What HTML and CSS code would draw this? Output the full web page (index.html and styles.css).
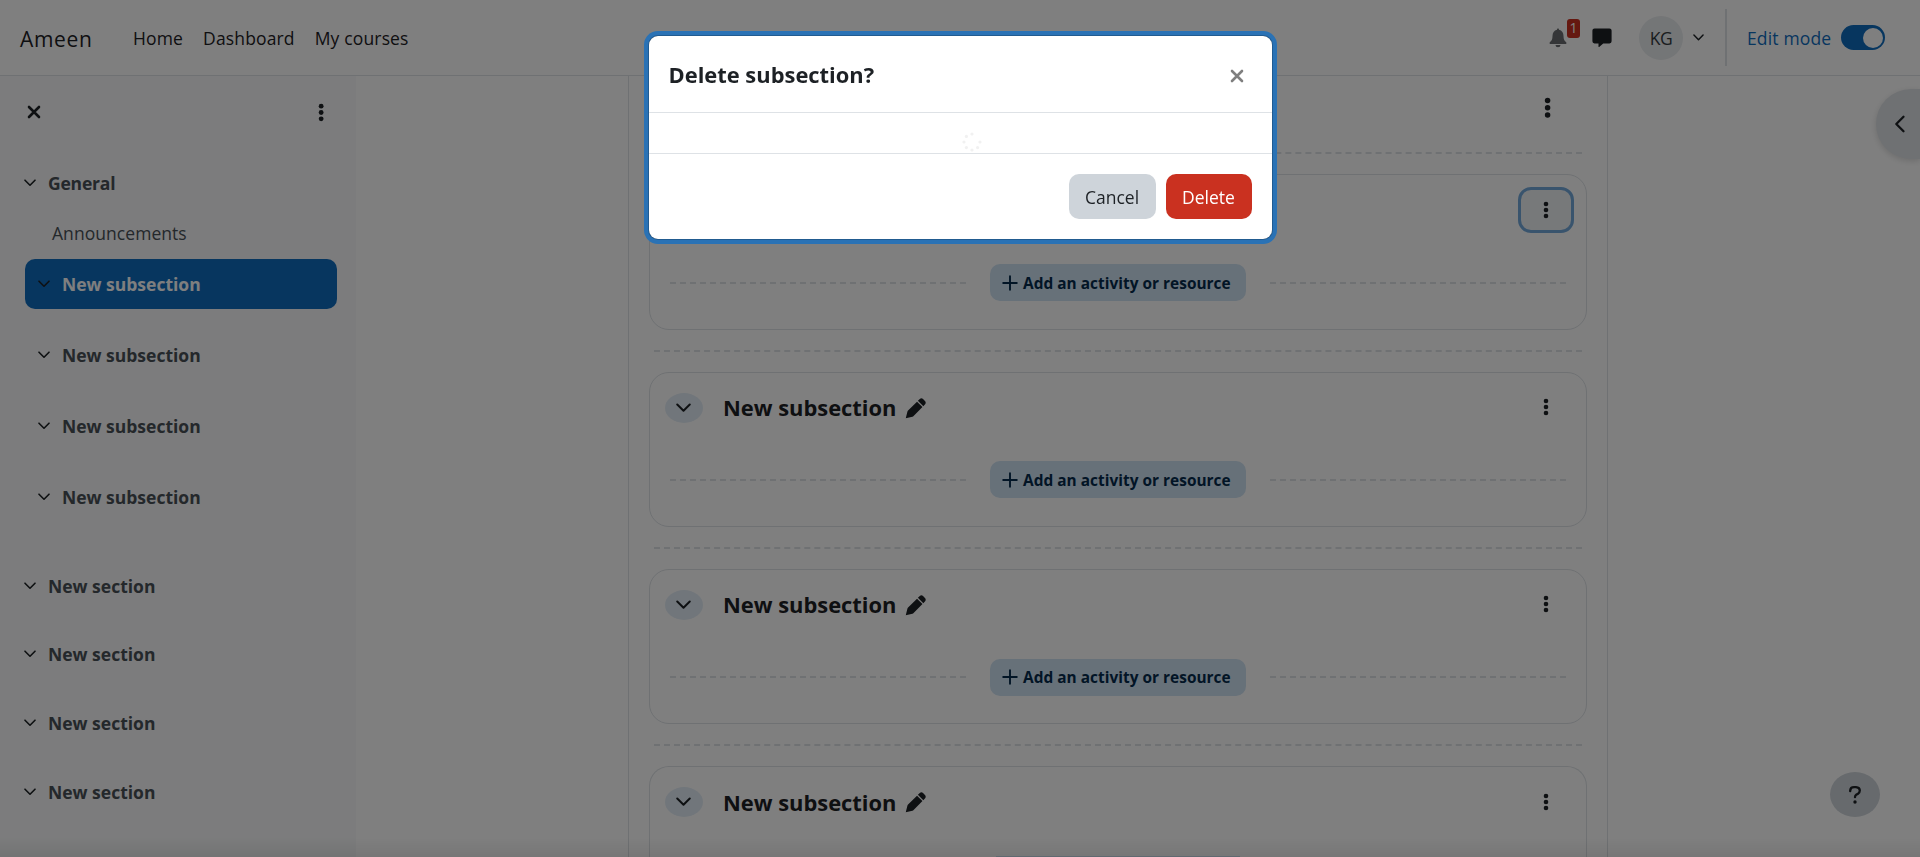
FILE: index.html
```html
<!DOCTYPE html>
<html lang="en">
<head>
<meta charset="utf-8">
<title>Ameen</title>
<link rel="stylesheet" href="styles.css">
</head>
<body>
<svg class="defs" width="0" height="0" aria-hidden="true">
  <symbol id="down" viewBox="0 0 12 8"><path d="M1 1.2 6 6.2 11 1.2" fill="none" stroke="currentColor" stroke-width="1.6" stroke-linecap="round" stroke-linejoin="round"/></symbol>
  <symbol id="dots" viewBox="0 0 6 18"><circle cx="3" cy="3" r="2.3"/><circle cx="3" cy="9" r="2.3"/><circle cx="3" cy="15" r="2.3"/></symbol>
  <symbol id="cross" viewBox="0 0 14 14"><path d="M2 2 12 12M12 2 2 12" fill="none" stroke="currentColor" stroke-width="2.6" stroke-linecap="round"/></symbol>
  <symbol id="plus" viewBox="0 0 16 16"><path d="M8 1.2V14.8M1.2 8H14.8" fill="none" stroke="currentColor" stroke-width="1.9" stroke-linecap="round"/></symbol>
  <symbol id="pen" viewBox="0 0 22 22"><path d="M.8 21.300 2.500 14.300Q2.700 13.600 3.200 13.100L12.600 3.900 18.300 9.500 9 18.900Q8.500 19.400 7.800 19.600ZM13.500 3 15.500 1Q17.200-.4 18.900 1.100L20.900 3.100Q22.400 4.800 21.100 6.500L19.200 8.600Z"/></symbol>
</svg>

<header class="topbar">
  <a class="brand">Ameen</a>
  <nav class="nav"><a>Home</a><a>Dashboard</a><a>My courses</a></nav>
  <div class="tools">
    <div class="bell">
      <svg width="18" height="20" viewBox="0 0 18 20"><path d="M9 .5C9.700 .5 10 1 10 1.800 13 2.500 14.500 4.800 14.500 8 14.500 11.500 15.500 13 17.300 14.200V16H.7V14.200C2.500 13 3.500 11.500 3.500 8 3.500 4.800 5 2.500 8 1.800 8 1 8.300 .5 9 .5ZM6.500 17H11.500A2.500 2.300 0 0 1 6.500 17Z"/></svg>
      <span class="badge">1</span>
    </div>
    <svg class="chat" width="20" height="20" viewBox="0 0 20 20"><path d="M2.500 .5H17.500Q19.600 .5 19.600 2.600V13.300Q19.600 15.400 17.500 15.400H11.200L7.200 18.900Q6.500 19.200 6.500 18.400V15.400H2.500Q.4 15.400 .4 13.300V2.600Q.4 .5 2.500 .5Z"/></svg>
    <span class="avatar">KG</span>
    <svg class="user-caret" width="11" height="7.300"><use href="#down"/></svg>
    <span class="divider"></span>
    <span class="edit">Edit mode</span>
    <span class="switch"><i></i></span>
  </div>
</header>

<div class="layout">
  <aside class="sidebar">
    <div class="side-head">
      <svg width="14" height="14"><use href="#cross"/></svg>
      <svg class="side-menu" width="6.300" height="19" viewBox="0 0 6 18"><use href="#dots"/></svg>
    </div>
    <div class="group">
      <div class="row"><svg width="12" height="8"><use href="#down"/></svg><b class="t-general">General</b></div>
      <div class="row leaf"><span>Announcements</span></div>
    </div>
    <div class="group subs">
      <div class="row sub active"><svg width="12" height="8"><use href="#down"/></svg><b>New subsection</b></div>
      <div class="row sub"><svg width="12" height="8"><use href="#down"/></svg><b>New subsection</b></div>
      <div class="row sub"><svg width="12" height="8"><use href="#down"/></svg><b>New subsection</b></div>
      <div class="row sub"><svg width="12" height="8"><use href="#down"/></svg><b>New subsection</b></div>
    </div>
    <div class="group sections">
      <div class="row"><svg width="12" height="8"><use href="#down"/></svg><b>New section</b></div>
      <div class="row"><svg width="12" height="8"><use href="#down"/></svg><b>New section</b></div>
      <div class="row"><svg width="12" height="8"><use href="#down"/></svg><b>New section</b></div>
      <div class="row"><svg width="12" height="8"><use href="#down"/></svg><b>New section</b></div>
    </div>
  </aside>

  <main class="main">
    <div class="course">
      <div class="course-head"><svg width="7.200" height="21.600" viewBox="0 0 6 18"><use href="#dots"/></svg></div>
      <div class="sep"></div>
      <section class="card">
        <div class="card-head">
          <span class="toggle"><svg width="15" height="10"><use href="#down"/></svg></span>
          <h3>New subsection</h3><svg class="pen" width="21" height="21"><use href="#pen"/></svg>
          <span class="menu focused"><svg width="6" height="18"><use href="#dots"/></svg></span>
        </div>
        <div class="add"><i></i><span class="add-btn"><svg width="16" height="16"><use href="#plus"/></svg><b>Add an activity or resource</b></span><i></i></div>
      </section>
      <div class="sep"></div>
      <section class="card">
        <div class="card-head">
          <span class="toggle"><svg width="15" height="10"><use href="#down"/></svg></span>
          <h3>New subsection</h3><svg class="pen" width="21" height="21"><use href="#pen"/></svg>
          <span class="menu"><svg width="6" height="18"><use href="#dots"/></svg></span>
        </div>
        <div class="add"><i></i><span class="add-btn"><svg width="16" height="16"><use href="#plus"/></svg><b>Add an activity or resource</b></span><i></i></div>
      </section>
      <div class="sep"></div>
      <section class="card">
        <div class="card-head">
          <span class="toggle"><svg width="15" height="10"><use href="#down"/></svg></span>
          <h3>New subsection</h3><svg class="pen" width="21" height="21"><use href="#pen"/></svg>
          <span class="menu"><svg width="6" height="18"><use href="#dots"/></svg></span>
        </div>
        <div class="add"><i></i><span class="add-btn"><svg width="16" height="16"><use href="#plus"/></svg><b>Add an activity or resource</b></span><i></i></div>
      </section>
      <div class="sep"></div>
      <section class="card last">
        <div class="card-head">
          <span class="toggle"><svg width="15" height="10"><use href="#down"/></svg></span>
          <h3>New subsection</h3><svg class="pen" width="21" height="21"><use href="#pen"/></svg>
          <span class="menu"><svg width="6" height="18"><use href="#dots"/></svg></span>
        </div>
        <div class="add-edge"></div>
      </section>
    </div>
  </main>
</div>

<div class="drawer"><svg width="12" height="18" viewBox="0 0 12 18"><path d="M9.500 1.800 2.300 9 9.500 16.200" fill="none" stroke="currentColor" stroke-width="2.300" stroke-linecap="round" stroke-linejoin="round"/></svg></div>
<div class="help"><svg width="14" height="20" viewBox="0 0 14 20"><path d="M2.200 6.200V5.600Q2.400 2.200 6 2.200H8Q11.800 2.400 11.800 5.600 11.800 7.500 10 8.700L8.200 9.800Q7 10.600 7 12.200" fill="none" stroke="currentColor" stroke-width="2.300" stroke-linecap="round"/><circle cx="7" cy="17" r="1.700"/></svg></div>
<div class="foot-shadow"></div>

<div class="backdrop">
  <div class="modal">
    <div class="modal-head"><h2>Delete subsection?</h2><svg width="14" height="14"><use href="#cross"/></svg></div>
    <div class="modal-body">
      <svg width="20" height="20" viewBox="0 0 20 20"><circle cx="10" cy="2" r="1.600"/><circle cx="4.400" cy="4.400" r="1.600"/><circle cx="18" cy="10" r="1.600"/><circle cx="15.600" cy="15.600" r="1.600"/><circle cx="10" cy="18" r="1.600"/><circle cx="4.400" cy="15.600" r="1.600"/><circle cx="2" cy="10" r="1.600"/></svg>
    </div>
    <div class="modal-foot"><button class="cancel">Cancel</button><button class="delete">Delete</button></div>
  </div>
</div>
</body>
</html>
```
FILE: styles.css
```css
* { box-sizing: border-box; }
body {
  margin: 0; height: 857px; overflow: hidden; background: #fff; color: #1d2125;
  font-family: "Open Sans", "Noto Sans", sans-serif; font-size: 17.5px;
}
svg { display: block; flex: none; fill: currentColor; overflow: visible; }
.defs { position: absolute; }
h2, h3 { margin: 0; font-weight: 700; white-space: nowrap; }

.topbar { height: 76px; border-bottom: 1px solid #dee2e6; display: flex; align-items: center; padding: 0 35px 0 20px; white-space: nowrap; }
.brand { width: 113px; font-size: 21px; letter-spacing: .7px; padding-top: 2px; }
.nav { display: flex; gap: 20px; letter-spacing: .15px; padding-top: 1px; }
.tools { margin-left: auto; display: flex; align-items: center; }
.bell { position: relative; color: #6a6d70; margin-right: 25px; }
.badge { position: absolute; left: 18px; top: -9px; width: 13px; height: 19px; border-radius: 3px; background: #ca3120; color: #fff; font-size: 14px; line-height: 18px; text-align: center; }
.chat { margin-right: 27px; }
.avatar { width: 44px; height: 44px; border-radius: 50%; background: #e9ecef; line-height: 44px; text-align: center; letter-spacing: -.4px; color: #343a40; }
.user-caret { margin: 0 21px 0 10px; }
.divider { width: 2px; height: 57px; background: #dee2e6; }
.edit { width: 94px; margin-left: 20px; color: #0f6cbf; letter-spacing: .15px; }
.switch { width: 44px; height: 25px; border-radius: 13px; background: #0f6cbf; display: flex; justify-content: flex-end; align-items: center; padding-right: 2px; }
.switch i { width: 20px; height: 20px; border-radius: 50%; background: #fff; }

.layout { display: flex; height: 781px; }
.sidebar { width: 356px; flex: none; background: #f8f9fa; padding: 0 19px 0 25px; }
.side-head { height: 82px; display: flex; align-items: flex-start; justify-content: space-between; padding: 29px 12.500px 0 2px; }
.side-menu { margin-top: -2px; }
.row { height: 50px; display: flex; align-items: center; gap: 12px; white-space: nowrap; color: #495057; border-radius: 10px; }
.row svg { color: #1d2125; margin-left: -1px; }
.t-general { letter-spacing: -.2px; }
.leaf { padding-left: 27px; letter-spacing: .05px; }
.subs { display: grid; gap: 21px; padding-top: 1px; }
.sub { padding-left: 14px; }
.active { background: #0f6cbf; color: #fff; }
.sections { display: grid; gap: 18.700px; margin-top: 38.800px; }

.main { flex: 1; display: flex; padding-left: 272px; }
.course { width: 980px; border: solid #dee2e6; border-width: 0 1px; padding: 0 20px; }
.course-head { height: 76.400px; display: flex; justify-content: flex-end; padding: 20.500px 36px 0 0; }
.sep { height: 42px; padding: 0 5px; display: flex; align-items: center; }
.course-head + .sep { height: 22px; align-items: flex-start; }
.sep::before, .add i { content: ""; flex: 1; border-top: 2px dashed #dee2e6; }
.card { height: 155.300px; border: 1px solid #dee2e6; border-radius: 20px; }
.card.last { height: 90.300px; border-bottom: 0; border-radius: 20px 20px 0 0; }
.card-head { height: 70px; display: flex; align-items: center; padding: 0 12px 0 15px; }
.toggle { width: 38px; height: 30px; border-radius: 50%; background: #e3edf6; display: grid; place-items: center; margin-right: 20px; }
.toggle svg { margin-right: 1px; }
h3 { font-size: 21.900px; }
.pen { margin-left: 9px; margin-top: 1px; }
.menu { margin: -1px 0 0 auto; width: 56px; height: 46px; border: 3px solid transparent; border-radius: 13px; display: grid; place-items: center; }
.focused { border-color: #73a9db; background: #eef2f5; margin-top: 0; }
.add { margin: 18.700px 20px 0; height: 37px; display: flex; align-items: center; gap: 24px; }
.add-btn { width: 256px; height: 37px; border-radius: 10px; background: #cfe2f2; color: #052b4c; display: flex; align-items: center; gap: 5px; padding-left: 12px; white-space: nowrap; font-size: 15.400px; letter-spacing: .03px; }
.add-btn b { padding-top: 1.500px; }
.add-edge { width: 244px; height: 1px; margin: 18.700px auto 0; background: #cfe2f2; }

.drawer { position: fixed; right: 0; top: 89px; width: 44px; height: 70px; border-radius: 35px 0 0 35px; background: #dee2e6; padding: 26px 0 0 18px; box-shadow: 0 2px 6px rgba(0,0,0,.15); }
.help { position: fixed; right: 40px; bottom: 40px; width: 50px; height: 45px; border-radius: 50%; background: #ced4da; display: grid; place-items: center; }
.foot-shadow { position: fixed; left: 0; right: 0; bottom: 0; height: 20px; background: linear-gradient(rgba(0,0,0,0), rgba(0,0,0,.07)); }

.backdrop { position: fixed; inset: 0; background: rgba(0,0,0,.5); padding-top: 35px; }
.modal { width: 625px; height: 205px; margin: 0 auto; background: #fff; background-clip: padding-box; border: 1px solid rgba(0,0,0,.2); border-radius: 10px; box-shadow: 0 0 0 4px #2a72b5; }
.modal-head { height: 77px; border-bottom: 1px solid #dee2e6; display: flex; align-items: center; justify-content: space-between; padding: 0 27.500px 0 20px; }
.modal-head svg { color: #7f7f7f; margin-top: 4px; }
h2 { font-size: 21.900px; padding-top: 1px; }
.modal-body { height: 41px; border-bottom: 1px solid #dee2e6; color: #f1f1f1; padding: 19px 0 0 313px; }
.modal-foot { display: flex; justify-content: flex-end; gap: 10px; padding: 20px; }
button { height: 45px; border: 0; border-radius: 10px; padding: 0; font: inherit; }
.cancel { width: 87px; background: #ced4da; color: #1d2125; }
.delete { width: 86px; background: #ca3120; color: #fff; }
```
